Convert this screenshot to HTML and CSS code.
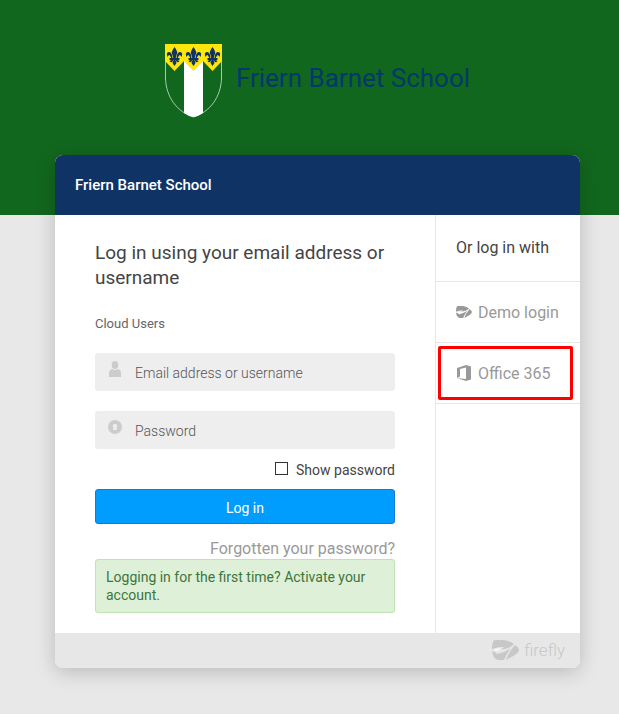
FILE: index.html
```html
<!DOCTYPE html>
<html lang="en">
<head>
    <meta charset="UTF-8">
    <meta name="viewport" content="width=device-width, initial-scale=1">
    <title>Log in - Friern Barnet School</title>
    <link rel="stylesheet" href="styles.css">
</head>
<body>
    <!-- shared firefly mark -->
    <svg class="symbols" aria-hidden="true">
        <symbol id="firefly" viewBox="0 0 27 20">
            <path d="M1 2Q1 0 4 0H12Q18 1 22 4Q19 7 16 8Q12 10 0 9Q0 4 1 2Z"/>
            <path d="M0 11Q4 12 5 14Q12 13 19 8Q15 13 12 20H6Q1 19 0 11Z"/>
            <path d="M23 5Q27 8 27 10Q27 12 23 15L14 20Q16 13 23 5Z"/>
            <path class="wing" d="M1 9Q5 7 12 7Q9 10 4 11Z"/>
        </symbol>
    </svg>

    <header class="banner">
        <svg class="crest" viewBox="0 0 57 74" role="img" aria-label="School crest">
            <defs>
                <g id="fleur">
                    <path d="M0 -9Q4 -4 2 -1L1 3H-1L-2 -1Q-4 -4 0 -9Z"/>
                    <path d="M2 3Q2 -3 5 -4Q9 -4 7 1Q6 -1 5 -1Q4 0 3 3Z"/>
                    <path d="M-2 3Q-2 -3 -5 -4Q-9 -4 -7 1Q-6 -1 -5 -1Q-4 0 -3 3Z"/>
                    <path d="M-5 2H5V4H-5ZM-1 4H1L2 7L0 10L-2 7Z"/>
                    <path d="M1 4Q3 8 5 5L3 4ZM-1 4Q-3 8 -5 5L-3 4Z"/>
                </g>
            </defs>
            <path class="crest-edge" d="M.5 .5H56.5V34C56 53 45 68 28.500 73C12 68 1 53 .5 34Z"/>
            <path fill="#fff" d="M19 15H38V69Q34 72 28.500 73Q23 72 19 69Z"/>
            <path class="crest-chief" d="M0 0H57V17L47.500 27L38 17L28.500 27L19 17L9.500 27L0 17Z"/>
            <g fill="#103366">
                <use href="#fleur" x="9.500" y="12"/>
                <use href="#fleur" x="28.500" y="12"/>
                <use href="#fleur" x="47.500" y="12"/>
            </g>
        </svg>
        <h1 class="school-name">Friern Barnet School</h1>
    </header>

    <main class="card">
        <div class="card-header">Friern Barnet School</div>

        <div class="card-body">
            <form class="login" action="#">
                <h2 class="login-title">Log in using your email address or username</h2>
                <p class="login-group">Cloud Users</p>

                <label class="field">
                    <svg class="field-icon" viewBox="0 0 14 16" aria-hidden="true">
                        <ellipse cx="7" cy="4" rx="3.300" ry="4"/>
                        <path d="M1 16V12Q1 9 4 8Q7 10 10 8Q13 9 13 12V16Z"/>
                    </svg>
                    <input class="field-input" type="text" placeholder="Email address or username" aria-label="Email address or username">
                </label>

                <label class="field">
                    <svg class="field-icon" viewBox="0 0 14 16" aria-hidden="true">
                        <path fill-rule="evenodd" d="M7 1A7 7 0 1 1 7 15A7 7 0 1 1 7 1ZM7 5A2 2 0 0 0 5.500 8.500L5 11H9L8.500 8.500A2 2 0 0 0 7 5Z"/>
                    </svg>
                    <input class="field-input" type="password" placeholder="Password" aria-label="Password">
                </label>

                <label class="show-password">
                    <input class="checkbox" type="checkbox">
                    Show password
                </label>

                <button class="login-button" type="submit">Log in</button>
                <a class="forgotten" href="#">Forgotten your password?</a>
                <a class="activate" href="#">Logging in for the first time? Activate your account.</a>
            </form>

            <aside class="other">
                <h3 class="other-title">Or log in with</h3>
                <a class="other-link" href="#">
                    <svg class="other-icon" viewBox="0 0 27 20" aria-hidden="true"><use href="#firefly"/></svg>
                    Demo login
                </a>
                <a class="other-link highlighted" href="#">
                    <svg class="other-icon" viewBox="0 0 16 16" aria-hidden="true">
                        <path d="M1 3L10 0L15 1.500V14.500L10 16L1 13L10 14V2.500L4 4V11.500L1 13Z"/>
                    </svg>
                    Office 365
                </a>
            </aside>
        </div>

        <footer class="card-footer">
            <svg class="footer-logo" viewBox="0 0 27 20" aria-hidden="true"><use href="#firefly"/></svg>
            <span>firefly</span>
        </footer>
    </main>
</body>
</html>
```
FILE: styles.css
```css
* {
    box-sizing: border-box;
}
body {
    margin: 0;
    background: #e8e8e8;
    color: #444;
    font-family: Roboto, "Liberation Sans", sans-serif;
    font-size: 14px;
}
a {
    text-decoration: none;
}
.symbols {
    position: absolute;
    width: 0;
    height: 0;
}
.wing {
    fill: #fff;
    fill-opacity: 0.7;
}

/* banner */
.banner {
    display: flex;
    justify-content: center;
    gap: 14px;
    height: 215px;
    padding: 44px 39px 0 55px;
    background: #12671e;
}
.crest {
    width: 57px;
    height: 74px;
}
.crest-edge {
    fill: none;
    stroke: #a9cbad;
}
.crest-chief {
    fill: #ffe60a;
}
.school-name {
    margin: 0;
    color: #03386b;
    font-size: 26px;
    font-weight: 400;
    line-height: 68px;
}

/* card */
.card {
    max-width: 525px;
    margin: -60px 39px 40px 55px;
    border-radius: 8px;
    background: #fff;
    box-shadow: 0 4px 20px rgba(0, 0, 0, 0.2);
}
.card-header {
    height: 60px;
    padding: 0 20px;
    border-radius: 8px 8px 0 0;
    background: #103366;
    color: #fff;
    font-size: 15px;
    font-weight: 500;
    line-height: 61px;
}
.card-body {
    display: flex;
}
.card-footer {
    display: flex;
    align-items: center;
    justify-content: flex-end;
    gap: 5px;
    height: 35px;
    padding: 0 15px 2px;
    border-radius: 0 0 8px 8px;
    background: #e7e7e7;
    color: #c8c8c8;
    font-size: 17px;
    font-weight: 300;
}
.footer-logo {
    width: 27px;
    height: 20px;
    fill: #c8c8c8;
}

/* login form */
.login {
    display: flex;
    flex: 1;
    flex-direction: column;
    padding: 25px 40px 20px;
}
.login-title {
    margin: 0 0 24px;
    font-size: 19px;
    font-weight: 400;
    line-height: 25px;
}
.login-group {
    margin: 0 0 19px;
    color: #666;
    font-size: 13px;
    line-height: 20px;
}
.field {
    display: flex;
    height: 38px;
    margin-bottom: 20px;
    padding: 8px 13px;
    border-radius: 3px;
    background: #eee;
}
.field-icon {
    width: 14px;
    height: 16px;
    fill: #ccc;
}
.field-input {
    flex: 1;
    min-width: 0;
    height: 24px;
    margin-left: 13px;
    padding: 0;
    border: 0;
    outline: 0;
    background: none;
    color: #444;
    font: inherit;
}
.field-input::placeholder {
    color: #555;
    font-weight: 300;
}
.show-password {
    display: flex;
    align-items: center;
    justify-content: flex-end;
    gap: 8px;
    height: 20px;
    margin: -9px 0 9px;
}
.checkbox {
    width: 13px;
    height: 13px;
    margin: 0 0 3px;
    border: 1px solid #333;
    background: #fff;
    appearance: none;
}
.checkbox:checked {
    background: #009dff;
}
.login-button {
    height: 35px;
    padding: 2px 0 0;
    border: 1px solid #1b78d0;
    border-radius: 3px;
    background: #009dff;
    color: #fff;
    font: inherit;
}
.forgotten {
    margin-top: 15px;
    color: #999;
    font-size: 16px;
    line-height: 20px;
    text-align: right;
}
.activate {
    padding: 8px 10px;
    border: 1px solid #c1e2b3;
    border-radius: 3px;
    background: #dff0d8;
    color: #3c763d;
    line-height: 18px;
}

/* other ways to log in */
.other {
    flex: 0 0 145px;
    border-left: 1px solid #e7e7e7;
}
.other-title {
    margin: 0;
    padding: 0 20px;
    border-bottom: 1px solid #e7e7e7;
    font-size: 16px;
    font-weight: 400;
    line-height: 66px;
}
.other-link {
    position: relative;
    display: flex;
    align-items: center;
    gap: 6px;
    height: 61px;
    padding-left: 20px;
    border-bottom: 1px solid #e7e7e7;
    color: #999;
    font-size: 16px;
    white-space: nowrap;
}
.other-icon {
    width: 16px;
    height: 16px;
    fill: #999;
}
.highlighted::after {
    content: "";
    position: absolute;
    inset: 3px 7px 3px 2px;
    border: 3px solid #f00;
    border-radius: 2px;
}
```
